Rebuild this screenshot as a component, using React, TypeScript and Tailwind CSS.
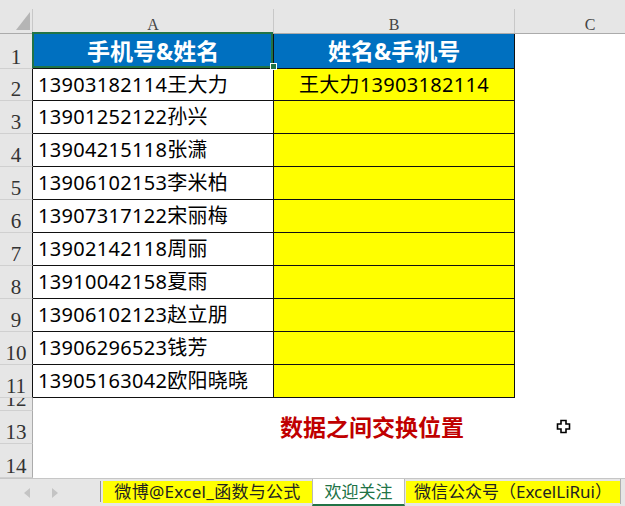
import React from "react";

const rows: [string, string][] = [
  ["13903182114王大力", "王大力13903182114"],
  ["13901252122孙兴", ""],
  ["13904215118张潇", ""],
  ["13906102153李米柏", ""],
  ["13907317122宋丽梅", ""],
  ["13902142118周丽", ""],
  ["13910042158夏雨", ""],
  ["13906102123赵立朋", ""],
  ["13906296523钱芳", ""],
  ["13905163042欧阳晓晓", ""],
];

function RowHead({ n, dark, h }: { n: number; dark?: boolean; h: string }) {
  return (
    <div
      className={`w-[33px] shrink-0 ${h} bg-[#e6e6e6] border-b border-[#d0d0d0] border-r ${
        dark ? "border-r-[#111]" : "border-r-[#ababab]"
      } flex items-end justify-center overflow-hidden font-['Liberation_Serif',serif] text-[21px] leading-none text-[#333]`}
    >
      <span className="block">{n}</span>
    </div>
  );
}

export default function App() {
  return (
    <div className="w-[625px] h-[506px] bg-white overflow-hidden flex flex-col font-['Noto_Sans','Noto_Sans_CJK_SC',sans-serif]">
      {/* top strip */}
      <div className="h-[9px] shrink-0 bg-[#e6e6e6]" />
      {/* column headers */}
      <div className="h-[25px] shrink-0 flex bg-[#e6e6e6] border-b border-[#ababab]">
        <div className="w-[33px] shrink-0 border-r border-[#c8c8c8] relative">
          <svg className="absolute left-0 top-0" width="33" height="24" viewBox="0 0 33 24">
            <polygon points="30,3 30,21 16,21" fill="#b5b5b5" />
          </svg>
        </div>
        <div className="w-[241px] shrink-0 border-r border-[#c8c8c8] flex items-end justify-center font-['Liberation_Serif',serif] text-[16px] leading-none text-[#444]">
          A
        </div>
        <div className="w-[241px] shrink-0 border-r border-[#c8c8c8] flex items-end justify-center font-['Liberation_Serif',serif] text-[16px] leading-none text-[#444]">
          B
        </div>
        <div className="w-[150px] shrink-0 flex items-end justify-center font-['Liberation_Serif',serif] text-[16px] leading-none text-[#444]">
          C
        </div>
      </div>

      {/* row 1 header */}
      <div className="flex h-[35px] shrink-0">
        <RowHead n={1} dark h="h-[35px]" />
        <div className="relative w-[241px] shrink-0 bg-[#0070c0] border-r border-b border-[#111] flex items-center justify-center text-white font-bold text-[23px]">
          手机号&amp;姓名
          <div className="absolute top-[-2px] left-[-1px] right-0 bottom-0 border-2 border-[#217346]" />
          <div className="absolute right-[-4px] bottom-[-2px] w-[7px] h-[7px] bg-[#217346] border border-white" />
        </div>
        <div className="w-[241px] shrink-0 bg-[#0070c0] border-r border-b border-[#111] flex items-center justify-center text-white font-bold text-[23px]">
          姓名&amp;手机号
        </div>
        <div className="flex-1" />
      </div>

      {rows.map(([a, b], i) => {
        const h = i === 0 ? "h-[32px]" : "h-[33px]";
        return (
          <div key={i} className={`flex ${h} shrink-0`}>
            <RowHead n={i + 2} dark h={h} />
            <div className="w-[241px] shrink-0 bg-white border-r border-b border-[#111] flex items-center pl-[5px] text-[20px] tracking-[0.3px] text-black whitespace-nowrap">
              {a}
            </div>
            <div className="w-[241px] shrink-0 bg-[#ffff00] border-r border-b border-[#111] flex items-center justify-center text-[20px] tracking-[0.3px] text-black whitespace-nowrap">
              {b}
            </div>
            <div className="flex-1" />
          </div>
        );
      })}

      {/* row 12 */}
      <div className="flex h-[13px] shrink-0">
        <RowHead n={12} h="h-[13px]" />
        <div className="flex-1" />
      </div>
      {/* row 13 */}
      <div className="flex h-[33px] shrink-0">
        <RowHead n={13} h="h-[33px]" />
        <div className="w-[241px] shrink-0" />
        <div className="w-[241px] shrink-0 flex items-center pl-[6px] text-[23px] font-bold text-[#c00000] whitespace-nowrap overflow-visible">
          数据之间交换位置
        </div>
        <div className="flex-1 relative">
          <svg className="absolute left-[41px] top-[8px]" width="15" height="15" viewBox="0 0 15 15">
            <path
              d="M5 1.5 H10 V5 H13.5 V10 H10 V13.5 H5 V10 H1.5 V5 H5 Z"
              fill="#fff"
              stroke="#000"
              strokeWidth="1.6"
              strokeLinejoin="miter"
            />
          </svg>
        </div>
      </div>
      {/* row 14 */}
      <div className="flex h-[34px] shrink-0">
        <RowHead n={14} h="h-[34px]" />
        <div className="flex-1" />
      </div>

      {/* sheet tabs */}
      <div className="h-[28px] shrink-0 flex bg-[#e6e6e6] border-t border-[#c6c6c6]">
        <div className="w-[100px] shrink-0 flex items-center gap-[20px] pl-[23px]">
          <svg width="8" height="10" viewBox="0 0 8 10">
            <polygon points="7,0 7,10 1,5" fill="#c4c4c4" />
          </svg>
          <svg width="8" height="10" viewBox="0 0 8 10">
            <polygon points="1,0 1,10 7,5" fill="#c4c4c4" />
          </svg>
        </div>
        <div className="w-px h-[21px] mt-[2px] bg-[#8f8f8f] shrink-0" />
        <div className="w-[2px] shrink-0" />
        <div className="w-[209px] h-[22px] mt-[2px] shrink-0 bg-[#ffff00] flex items-center justify-center text-[17px] tracking-[0.3px] text-[#222] whitespace-nowrap">
          微博@Excel_函数与公式
        </div>
        <div className="w-[93px] h-[27px] shrink-0 bg-white border-x border-[#b8b8b8] border-b-2 border-b-[#217346] flex items-center justify-center text-[17px] text-[#217346] whitespace-nowrap">
          欢迎关注
        </div>
        <div className="w-px shrink-0" />
        <div className="w-[214px] h-[22px] mt-[2px] shrink-0 bg-[#ffff00] flex items-center justify-center text-[17px] text-[#222] whitespace-nowrap">
          微信公众号（ExcelLiRui）
        </div>
        <div className="w-px h-[25px] bg-[#b0b0b0] shrink-0" />
      </div>
    </div>
  );
}
